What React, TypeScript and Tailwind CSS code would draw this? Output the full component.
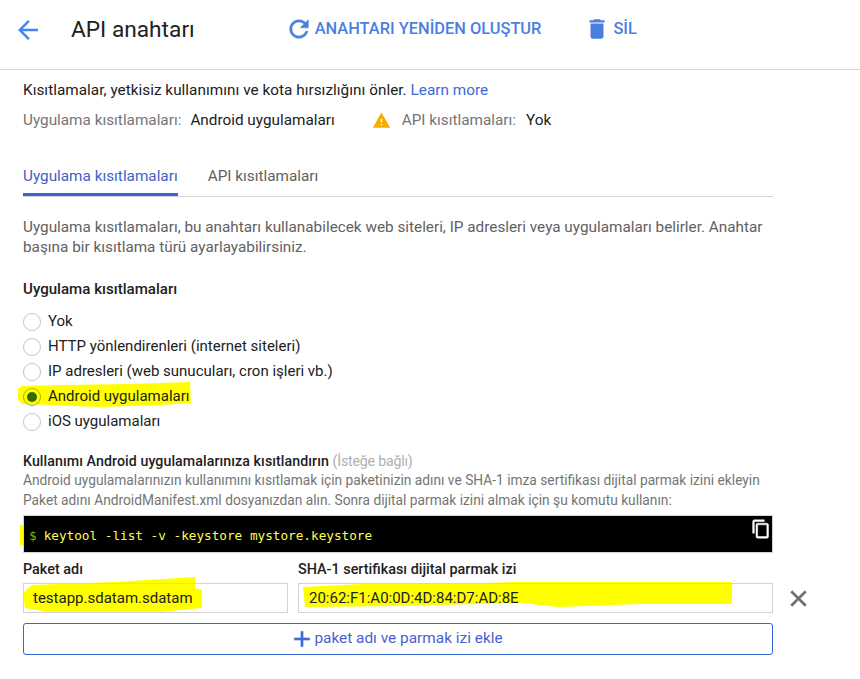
const radios = [
  'Yok',
  'HTTP yönlendirenleri (internet siteleri)',
  'IP adresleri (web sunucuları, cron işleri vb.)',
  'Android uygulamaları',
  'iOS uygulamaları',
];

const Radio = ({ label, checked }: { label: string; checked: boolean }) => {
  return (
    <div className="flex h-[25px] items-center">
      <span className={`flex h-[18px] w-[18px] items-center justify-center rounded-full border ${checked ? 'border-[#b0b000]' : 'border-[#c4c4c4]'}`}>
        {checked && <span className="h-[10px] w-[10px] rounded-full bg-[#2e6b00]" />}
      </span>
      <span className="ml-[7px] text-[15px] text-[#212121]">{label}</span>
    </div>
  );
};

// hand drawn marker strokes from the screenshot
const Highlights = () => {
  return (
    <svg className="absolute left-0 top-0 h-[679px] w-[860px]" viewBox="0 0 860 679" fill="#ffff00">
      <polygon points="18,389 22,386 60,385 130,384 190,382 191,403 160,405 100,407 50,405 22,404 18,400" />
      <polygon points="20,525 24,525 24,545 20,545" />
      <polygon points="32,585 23,593 25,608 48,612 148,613 202,608 202,590 195,588 195,577 115,582" />
      <polygon points="303,587 362,584 452,584 515,582 732,582 732,604 640,604 558,607 522,603 515,603 395,606 305,607" />
    </svg>
  );
};

const App = () => {
  return (
    <div className="relative h-[679px] w-[860px] overflow-hidden bg-white font-['Roboto',sans-serif]">
      <Highlights />
      <header className="relative flex h-[70px] items-start border-b border-[#d4d4d4] pt-[15px]">
        <svg className="ml-[13px] h-[30px] w-[30px] fill-[#4285f4]" viewBox="0 0 24 24">
          <path d="M20 11H7.830l5.590-5.590L12 4l-8 8 8 8 1.410-1.410L7.830 13H20v-2z" />
        </svg>
        <h1 className="ml-[28px] text-[22.7px] leading-[30px] text-[#212121]">API anahtarı</h1>
        <div className="ml-[90px] flex items-center text-[#4a7fe0]">
          <svg className="h-[28px] w-[28px] fill-[#4a7fe0] stroke-[#4a7fe0] stroke-[0.4]" viewBox="0 0 24 24">
            <path d="M17.650 6.350C16.200 4.900 14.210 4 12 4c-4.420 0-7.990 3.580-7.990 8s3.570 8 7.990 8c3.730 0 6.840-2.550 7.730-6h-2.080c-.82 2.330-3.040 4-5.650 4-3.310 0-6-2.690-6-6s2.690-6 6-6c1.660 0 3.140.69 4.220 1.780L13 11h7V4l-2.350 2.350z" />
          </svg>
          <span className="ml-[2px] text-[16.4px] font-medium leading-[28px]">ANAHTARI YENİDEN OLUŞTUR</span>
        </div>
        <div className="ml-[43px] flex items-center text-[#4a7fe0]">
          <svg className="h-[26px] w-[26px] fill-[#4a7fe0]" viewBox="0 0 24 24">
            <path d="M6 19c0 1.100.9 2 2 2h8c1.100 0 2-.9 2-2V7H6v12zM19 4h-3.500l-1-1h-5l-1 1H5v2h14V4z" />
          </svg>
          <span className="ml-[3px] text-[16.4px] font-medium leading-[28px]">SİL</span>
        </div>
      </header>

      <main className="relative w-[773px] pl-[23px]">
        <p className="mt-[10px] text-[15.3px] leading-[20px] tracking-[0.03px] text-[#212121]">
          Kısıtlamalar, yetkisiz kullanımını ve kota hırsızlığını önler. <span className="text-[#3f6ad8]">Learn more</span>
        </p>
        <div className="mt-[10px] flex h-[20px] items-center text-[15.3px]">
          <span className="text-[#757575]">Uygulama kısıtlamaları:</span>
          <span className="ml-[9px] text-[#212121]">Android uygulamaları</span>
          <svg className="ml-[37px] h-[19px] w-[19px] fill-[#f9ab00]" viewBox="0 0 24 24">
            <path d="M1 21h22L12 2 1 21zm12-3h-2v-2h2v2zm0-4h-2v-4h2v4z" />
          </svg>
          <span className="ml-[11px] text-[#757575]">API kısıtlamaları:</span>
          <span className="ml-[10px] text-[#212121]">Yok</span>
        </div>

        <div className="mt-[30px] flex h-[37px] border-b border-[#d4d4d4] text-[15.3px] leading-[20px]">
          <div className="h-[36px] border-b-[3px] border-[#3367d6] pt-[6px] text-[#3f5fc4]">Uygulama kısıtlamaları</div>
          <div className="ml-[30px] pt-[6px] text-[#616161]">API kısıtlamaları</div>
        </div>

        <p className="mt-[20px] text-[15.3px] leading-[20px] text-[#616161]">
          Uygulama kısıtlamaları, bu anahtarı kullanabilecek web siteleri, IP adresleri veya uygulamaları belirler. Anahtar başına bir kısıtlama türü ayarlayabilirsiniz.
        </p>

        <h2 className="mt-[22px] text-[15.1px] font-medium leading-[20px] text-[#212121]">Uygulama kısıtlamaları</h2>

        <div className="mt-[10px]">
          {radios.map((label) => (
            <Radio key={label} label={label} checked={label === 'Android uygulamaları'} />
          ))}
        </div>

        <p className="mt-[17px] text-[14.2px] font-medium leading-[20px] tracking-[0.08px] text-[#212121]">
          Kullanımı Android uygulamalarınıza kısıtlandırın <span className="font-normal tracking-[-0.2px] text-[#b0b0b0]">(İsteğe bağlı)</span>
        </p>
        <p className="text-[13.75px] leading-[19.5px] whitespace-nowrap text-[#757575]">
          Android uygulamalarınızın kullanımını kısıtlamak için paketinizin adını ve SHA-1 imza sertifikası dijital parmak izini ekleyin
        </p>
        <p className="text-[13.75px] leading-[19.5px] text-[#757575]">
          Paket adını AndroidManifest.xml dosyanızdan alın. Sonra dijital parmak izini almak için şu komutu kullanın:
        </p>

        <div className="relative mt-[5px] flex h-[38px] items-center border border-[#d4d4d4] bg-black pl-[5px] pt-[3px] font-['DejaVu_Sans_Mono',monospace] text-[12.7px]">
          <span className="text-[#8fa800]">$</span>
          <span className="ml-[7px] text-[#ffff4d]">keytool -list -v -keystore mystore.keystore</span>
          <svg className="absolute right-[1px] top-[3px] h-[20px] w-[20px] fill-white stroke-white stroke-[0.6]" viewBox="0 0 24 24">
            <path d="M16 1H4c-1.100 0-2 .9-2 2v14h2V3h12V1zm3 4H8c-1.100 0-2 .9-2 2v14c0 1.100.9 2 2 2h11c1.100 0 2-.9 2-2V7c0-1.100-.9-2-2-2zm0 16H8V7h11v14z" />
          </svg>
        </div>

        <div className="mt-[7px] flex gap-[10px]">
          <div className="w-[265px] shrink-0">
            <div className="text-[14.4px] font-medium leading-[20px] text-[#212121]">Paket adı</div>
            <div className="mt-[3px] flex h-[30px] items-center border border-[#d4d4d4] pl-[9px] text-[15px] text-[#212121]">
              testapp.sdatam.sdatam
            </div>
          </div>
          <div className="w-[475px] shrink-0">
            <div className="text-[14.4px] font-medium leading-[20px] text-[#212121]">SHA-1 sertifikası dijital parmak izi</div>
            <div className="mt-[3px] flex h-[30px] items-center border border-[#d4d4d4] pl-[10px] text-[15px] text-[#212121]">
              20:62:F1:A0:0D:4D:84:D7:AD:8E
            </div>
          </div>
          <svg className="mb-[1px] ml-[2px] h-[27px] w-[27px] shrink-0 self-end fill-[#6b6b6b] stroke-[#6b6b6b] stroke-[0.5]" viewBox="0 0 24 24">
            <path d="M19 6.410L17.590 5 12 10.590 6.410 5 5 6.410 10.590 12 5 17.590 6.410 19 12 13.410 17.590 19 19 17.590 13.410 12z" />
          </svg>
        </div>

        <button className="mt-[10px] flex h-[32px] w-full items-center justify-center rounded-[3px] border border-[#3367d6] pr-[4px] text-[15.4px] text-[#4a5fd0]">
          <svg className="h-[26px] w-[26px] fill-[#3f6ad8] stroke-[#3f6ad8] stroke-[0.5]" viewBox="0 0 24 24">
            <path d="M19 13h-6v6h-2v-6H5v-2h6V5h2v6h6v2z" />
          </svg>
          <span className="ml-[-1px]">paket adı ve parmak izi ekle</span>
        </button>
      </main>
    </div>
  );
};

export default App;
